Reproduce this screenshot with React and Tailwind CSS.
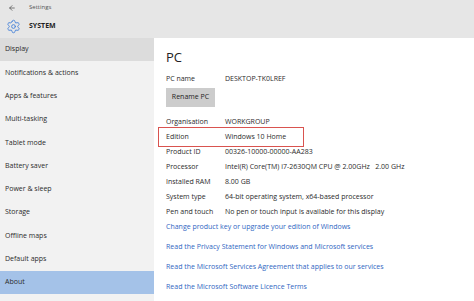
import React from "react";
import { Settings, ArrowLeft } from "lucide-react";

const menu = [
  "Display",
  "Notifications & actions",
  "Apps & features",
  "Multi-tasking",
  "Tablet mode",
  "Battery saver",
  "Power & sleep",
  "Storage",
  "Offline maps",
  "Default apps",
  "About",
];

const Row = ({ label, value, className = "" }) => (
  <div className={`flex items-center h-[15px] ${className}`}>
    <span className="w-[59px] shrink-0">{label}</span>
    <span className="whitespace-pre">{value}</span>
  </div>
);

export default function App() {
  return (
    <div
      className="w-[474px] h-[301px] overflow-hidden flex flex-col bg-[#f2f2f2] text-[#2b2b2b] text-[7px]"
      style={{ fontFamily: '"Open Sans", "Noto Sans", sans-serif' }}
    >
      {/* title band */}
      <div className="h-[38px] shrink-0 bg-[#e6e6e6] flex flex-col">
        <div className="h-[15px] flex items-center">
          <ArrowLeft className="ml-[8px] w-[8px] h-[8px] text-[#444]" strokeWidth={2} />
          <span className="ml-[13px] text-[6px] text-[#555]">Settings</span>
        </div>
        <div className="flex-1 flex items-center pb-[1px]">
          <Settings className="ml-[6px] w-[15px] h-[15px] text-[#4a84d9]" strokeWidth={1.5} />
          <span className="ml-[8px] text-[7px] font-bold text-[#1f1f1f]">SYSTEM</span>
        </div>
      </div>

      <div className="flex flex-1">
        {/* sidebar */}
        <div className="w-[154px] shrink-0 flex flex-col">
          {menu.map((item) => (
            <div
              key={item}
              className={`h-[23.3px] flex items-center pl-[5px] ${
                item === "Display" ? "bg-[#dcdcdc]" : item === "About" ? "bg-[#a4c2e8]" : ""
              }`}
            >
              {item}
            </div>
          ))}
        </div>

        {/* content */}
        <div className="flex-1 bg-white pl-[12px] pt-[10px] flex flex-col">
          <div className="text-[13px] leading-[18px] text-[#222] h-[18px]">PC</div>
          <Row label="PC name" value="DESKTOP-TK0LREF" className="mt-[6px]" />
          <div className="mt-[1px] w-[49px] h-[19px] bg-[#cccccc] flex items-center justify-center text-[#222]">
            Rename PC
          </div>
          <Row label="Organisation" value="WORKGROUP" className="mt-[8px]" />
          <div className="-mt-[3px] -ml-[8px] w-[146px] h-[20px] border-[1.5px] border-[#d9534f] pl-[7px] flex items-center">
            <Row label="Edition" value="Windows 10 Home" />
          </div>
          <Row label="Product ID" value="00326-10000-00000-AA283" className="-mt-[2px]" />
          <Row label="Processor" value="Intel(R) Core(TM) i7-2630QM CPU @ 2.00GHz   2.00 GHz" />
          <Row label="Installed RAM" value="8.00 GB" />
          <Row label="System type" value="64-bit operating system, x64-based processor" />
          <Row label="Pen and touch" value="No pen or touch input is available for this display" />
          <div className="flex flex-col text-[#2f66c2] -mt-[3px]">
            <div className="h-[20px] flex items-center">Change product key or upgrade your edition of Windows</div>
            <div className="h-[20px] flex items-center">Read the Privacy Statement for Windows and Microsoft services</div>
            <div className="h-[20px] flex items-center">Read the Microsoft Services Agreement that applies to our services</div>
            <div className="h-[20px] flex items-center">Read the Microsoft Software Licence Terms</div>
          </div>
        </div>
      </div>
    </div>
  );
}
